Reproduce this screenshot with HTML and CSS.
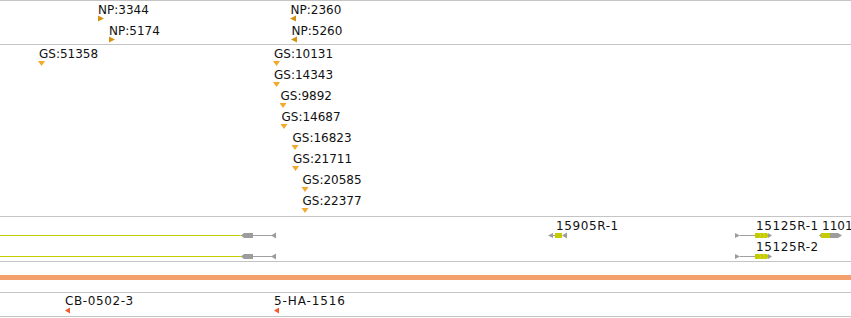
FILE: index.html
```html
<!DOCTYPE html>
<html lang="en">
<head>
  <meta charset="UTF-8" />
  <title>Track view</title>
  <link rel="stylesheet" href="styles.css">
</head>
<body>
  <div class="tracks">

    <!-- NP track -->
    <div class="track track-np">
      <svg class="canvas" width="851" height="43">
        <text class="lbl" x="98" y="13">NP:3344</text>
        <polygon class="np" points="98,14.5 104,17.5 98,20.5"/>
        <text class="lbl" x="109" y="34">NP:5174</text>
        <polygon class="np" points="109,35.5 115,38.5 109,41.5"/>
        <text class="lbl" x="290.5" y="13">NP:2360</text>
        <polygon class="np" points="296,14.5 290,17.5 296,20.5"/>
        <text class="lbl" x="291.5" y="34">NP:5260</text>
        <polygon class="np" points="297,35.5 291,38.5 297,41.5"/>
      </svg>
    </div>

    <!-- GS track -->
    <div class="track track-gs">
      <svg class="canvas" width="851" height="171">
        <text class="lbl" x="39" y="13">GS:51358</text>
        <polygon class="gs" points="38,16 45,16 41.5,21"/>

        <text class="lbl" x="274" y="13">GS:10131</text>
        <polygon class="gs" points="273,16 280,16 276.5,21"/>
        <text class="lbl" x="274" y="34">GS:14343</text>
        <polygon class="gs" points="273,37 280,37 276.5,42"/>
        <text class="lbl" x="280.5" y="55">GS:9892</text>
        <polygon class="gs" points="279.5,58 286.5,58 283,63"/>
        <text class="lbl" x="281.5" y="76">GS:14687</text>
        <polygon class="gs" points="280.5,79 287.5,79 284,84"/>
        <text class="lbl" x="292.5" y="97">GS:16823</text>
        <polygon class="gs" points="291.5,100 298.5,100 295,105"/>
        <text class="lbl" x="293" y="118">GS:21711</text>
        <polygon class="gs" points="292,121 299,121 295.5,126"/>
        <text class="lbl" x="302.5" y="139">GS:20585</text>
        <polygon class="gs" points="301.5,142 308.5,142 305,147"/>
        <text class="lbl" x="302.5" y="160">GS:22377</text>
        <polygon class="gs" points="301.5,163 308.5,163 305,168"/>
      </svg>
    </div>

    <!-- gene models -->
    <div class="track track-genes">
      <svg class="canvas" width="851" height="44">
        <!-- long transcripts on the left -->
        <line class="utr" x1="0" y1="18.5" x2="243" y2="18.5"/>
        <polygon class="exon-grey" points="241,18.5 244,16 253,16 253,21 244,21"/>
        <line class="intron" x1="253" y1="18.5" x2="272" y2="18.5"/>
        <polygon class="exon-grey" points="276,15.5 271,18.5 276,21.5"/>

        <line class="utr" x1="0" y1="39.5" x2="243" y2="39.5"/>
        <polygon class="exon-grey" points="241,39.5 244,37 253,37 253,42 244,42"/>
        <line class="intron" x1="253" y1="39.5" x2="272" y2="39.5"/>
        <polygon class="exon-grey" points="276,36.5 271,39.5 276,42.5"/>

        <!-- 15905R-1 -->
        <text class="lbl wide" x="556" y="12.5">15905R-1</text>
        <polygon class="exon-grey" points="553,16 548,18.5 553,21"/>
        <line class="intron" x1="553" y1="18.5" x2="555" y2="18.5"/>
        <rect class="cds" x="555" y="16" width="7" height="5"/>
        <polygon class="exon-grey" points="567,15.5 562,18.5 567,21.5"/>

        <!-- 15125R-1 -->
        <text class="lbl wide" x="756" y="12.5">15125R-1</text>
        <polygon class="exon-grey" points="735,16 740,18.5 735,21"/>
        <line class="intron" x1="740" y1="18.5" x2="755" y2="18.5"/>
        <polygon class="cds" points="755,16 759,16 761,18.5 759,21 755,21"/>
        <polygon class="cds" points="759,16 763,16 765,18.5 763,21 759,21 761,18.5"/>
        <polygon class="cds" points="763,16 767,16 769,18.5 767,21 763,21 765,18.5"/>
        <polygon class="exon-grey" points="768,16 772,18.5 768,21"/>

        <!-- 1101 (runs off the right edge) -->
        <text class="lbl" x="822" y="12.5">1101</text>
        <polygon class="exon-grey" points="822,16 819,18.5 822,21"/>
        <rect class="cds" x="821" y="16" width="9" height="5"/>
        <polygon class="exon-grey" points="830,16 838,16 842,18.5 838,21 830,21"/>

        <!-- 15125R-2 -->
        <text class="lbl wide" x="756" y="34">15125R-2</text>
        <polygon class="exon-grey" points="735,37 740,39.5 735,42"/>
        <line class="intron" x1="740" y1="39.5" x2="755" y2="39.5"/>
        <polygon class="cds" points="755,37 759,37 761,39.5 759,42 755,42"/>
        <polygon class="cds" points="759,37 763,37 765,39.5 763,42 759,42 761,39.5"/>
        <polygon class="cds" points="763,37 767,37 769,39.5 767,42 763,42 765,39.5"/>
        <polygon class="exon-grey" points="768,37 772,39.5 768,42"/>
      </svg>
    </div>

    <!-- sequence bar -->
    <div class="track track-bar">
      <div class="bar"></div>
    </div>

    <!-- clone track -->
    <div class="track track-clones">
      <svg class="canvas" width="851" height="23">
        <text class="lbl wide" x="65" y="12">CB-0502-3</text>
        <polygon class="clone" points="70,14.5 65,17.5 70,20.5"/>
        <text class="lbl wider" x="274" y="12">5-HA-1516</text>
        <polygon class="clone" points="279,14.5 274,17.5 279,20.5"/>
      </svg>
    </div>

  </div>
</body>
</html>
```

FILE: styles.css
```css
body {
  margin: 0;
  padding: 0;
  background: #fff;
  font-family: "DejaVu Sans", sans-serif;
  overflow: hidden;
}

.tracks {
  width: 851px;
  border-top: 1px solid #c4c4c4;
}

.track {
  position: relative;
  border-bottom: 1px solid #c4c4c4;
}

.canvas {
  display: block;
  overflow: hidden;
}

.track-np { height: 43px; }
.track-gs { height: 171px; }
.track-genes { height: 44px; }
.track-bar { height: 31px; }
.track-clones { height: 23px; }

.lbl {
  font-family: "DejaVu Sans", sans-serif;
  font-size: 12px;
  fill: #111;
}

.lbl.wide { letter-spacing: 0.6px; }
.lbl.wider { letter-spacing: 0.9px; }

.np { fill: #d39210; }
.gs { fill: #f2a92c; }
.clone { fill: #f25a2c; }

.utr {
  stroke: #c4cc00;
  stroke-width: 1;
}

.intron {
  stroke: #a0a0a0;
  stroke-width: 1;
}

.exon-grey { fill: #9c9c9c; }
.cds { fill: #c4cc00; }

.track-bar {
  padding-top: 13px;
  box-sizing: border-box;
}

.bar {
  height: 5px;
  background: #f1a06e;
}
```
